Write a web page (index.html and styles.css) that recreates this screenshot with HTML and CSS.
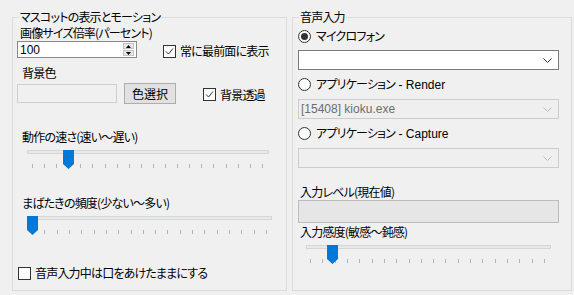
FILE: index.html
```html
<!DOCTYPE html>
<html>

<head>
  <meta charset="utf-8">
  <link rel="stylesheet" href="styles.css">
</head>

<body>
  <div class="window">

    <fieldset class="group group-left">
      <legend>マスコットの表示とモーション</legend>

      <div class="lbl lbl-size">画像サイズ倍率(パーセント)</div>
      <div class="row row-size">
        <div class="num">
          <span class="num-value">100</span>
          <div class="spin">
            <span class="spin-btn"><svg width="5" height="3" viewBox="0 0 5 3"><path d="M0 3 L2.5 0 L5 3 Z" fill="#000"/></svg></span>
            <span class="spin-btn"><svg width="5" height="3" viewBox="0 0 5 3"><path d="M0 0 L2.5 3 L5 0 Z" fill="#000"/></svg></span>
          </div>
        </div>
        <label class="check check-top">
          <span class="box"><svg width="11" height="11" viewBox="0 0 11 11"><polyline points="2,5.5 4.5,8 9,2.5" fill="none" stroke="#333" stroke-width="1"/></svg></span>
          常に最前面に表示
        </label>
      </div>

      <div class="lbl lbl-bg">背景色</div>
      <div class="row row-bg">
        <div class="color-box"></div>
        <button class="btn">色選択</button>
        <label class="check check-trans">
          <span class="box"><svg width="11" height="11" viewBox="0 0 11 11"><polyline points="2,5.5 4.5,8 9,2.5" fill="none" stroke="#333" stroke-width="1"/></svg></span>
          背景透過
        </label>
      </div>

      <div class="lbl lbl-speed">動作の速さ(速い～遅い)</div>
      <div class="slider slider-speed">
        <div class="track"></div>
        <div class="ticks ticks-speed"><i></i><i></i><i></i><i></i><i></i><i></i><i></i><i></i><i></i><i></i><i></i><i></i><i></i><i></i><i></i><i></i><i></i><i></i><i></i><i></i></div>
        <svg class="thumb" style="left: 36px" width="11" height="19" viewBox="0 0 11 19"><path d="M0 0 H11 V14 L5.5 19 L0 14 Z" fill="#0078d7"/></svg>
      </div>

      <div class="lbl lbl-blink">まばたきの頻度(少ない～多い)</div>
      <div class="slider slider-blink">
        <div class="track"></div>
        <div class="ticks ticks-blink"><i></i><i></i><i></i><i></i><i></i><i></i><i></i><i></i><i></i><i></i><i></i><i></i><i></i><i></i><i></i><i></i><i></i><i></i><i></i><i></i></div>
        <svg class="thumb" style="left: 0px" width="11" height="19" viewBox="0 0 11 19"><path d="M0 0 H11 V14 L5.5 19 L0 14 Z" fill="#0078d7"/></svg>
      </div>

      <label class="check check-mouth">
        <span class="box"></span>
        音声入力中は口をあけたままにする
      </label>
    </fieldset>

    <fieldset class="group group-right">
      <legend>音声入力</legend>

      <label class="radio radio-first">
        <span class="circle on"></span>
        マイクロフォン
      </label>
      <div class="combo">
        <span class="combo-text"></span>
        <svg width="9" height="5" viewBox="0 0 9 5"><polyline points="0.5,0.5 4.5,4.5 8.5,0.5" fill="none" stroke="#333" stroke-width="1"/></svg>
      </div>

      <label class="radio">
        <span class="circle"></span>
        <span>アプリケーション<span class="latin"> - Render</span></span>
      </label>
      <div class="combo off">
        <span class="combo-text">[15408] kioku.exe</span>
        <svg width="9" height="5" viewBox="0 0 9 5"><polyline points="0.5,0.5 4.5,4.5 8.5,0.5" fill="none" stroke="#bcbcbc" stroke-width="1"/></svg>
      </div>

      <label class="radio">
        <span class="circle"></span>
        <span>アプリケーション<span class="latin"> - Capture</span></span>
      </label>
      <div class="combo off">
        <span class="combo-text"></span>
        <svg width="9" height="5" viewBox="0 0 9 5"><polyline points="0.5,0.5 4.5,4.5 8.5,0.5" fill="none" stroke="#bcbcbc" stroke-width="1"/></svg>
      </div>

      <div class="lbl lbl-level">入力レベル(現在値)</div>
      <div class="level"></div>

      <div class="lbl lbl-sens">入力感度(敏感～鈍感)</div>
      <div class="slider slider-sens">
        <div class="track"></div>
        <div class="ticks ticks-sens"><i></i><i></i><i></i><i></i><i></i><i></i><i></i><i></i><i></i><i></i><i></i><i></i><i></i><i></i><i></i><i></i><i></i><i></i><i></i><i></i></div>
        <svg class="thumb" style="left: 21px" width="11" height="19" viewBox="0 0 11 19"><path d="M0 0 H11 V14 L5.5 19 L0 14 Z" fill="#0078d7"/></svg>
      </div>
    </fieldset>

  </div>
</body>

</html>
```

FILE: styles.css
```css
* {
  box-sizing: border-box;
}

body {
  margin: 0;
  background: #f0f0f0;
  color: #000;
  font-family: "Noto Sans CJK JP", sans-serif;
  font-size: 12px;
  line-height: 14px;
  letter-spacing: -0.8px;
  font-feature-settings: "palt";
}

.window {
  display: flex;
  gap: 5px;
  padding: 11px 0 0 12px;
}

/* group boxes */

.group {
  margin: 0;
  padding: 0;
  min-width: 0;
  height: 280px;
  border: 1px solid #dcdcdc;
}

.group-left {
  width: 275px;
}

.group-right {
  width: 280px;
}

.group legend {
  margin-left: 6px;
  padding: 0 1px;
  line-height: 12px;
}

.lbl {
  margin-left: 7px;
}

.row {
  display: flex;
  align-items: center;
}

/* left side */

.lbl-size {
  margin-top: 3px;
}

.row-size {
  margin-top: 1px;
  margin-left: 4px;
}

.num {
  display: flex;
  align-items: center;
  justify-content: space-between;
  width: 120px;
  height: 17px;
  padding: 0 2px 0 2px;
  background: #fff;
  border: 1px solid #8a8a8a;
  font-family: "Liberation Sans", sans-serif;
  letter-spacing: 0;
}

.spin {
  display: flex;
  flex-direction: column;
  gap: 1px;
}

.spin-btn {
  display: flex;
  align-items: center;
  justify-content: center;
  width: 11px;
  height: 6px;
  background: #e6e6e6;
  border: 1px solid #c4c4c4;
}

.check {
  display: flex;
  align-items: center;
  gap: 4px;
}

.box {
  display: flex;
  align-items: center;
  justify-content: center;
  flex: none;
  width: 13px;
  height: 13px;
  background: #fff;
  border: 1px solid #333;
}

.check-top {
  margin-left: 26px;
  margin-top: 3px;
}

.lbl-bg {
  margin-top: 8px;
  margin-left: 9px;
}

.row-bg {
  margin-top: 3px;
  margin-left: 4px;
}

.color-box {
  width: 100px;
  height: 19px;
  background: #f0f0f0;
  border: 1px solid #cfcfcf;
}

.btn {
  width: 52px;
  height: 21px;
  margin-left: 7px;
  padding: 0;
  background: #e1e1e1;
  border: 1px solid #adadad;
  font: inherit;
  letter-spacing: 0;
  color: #000;
}

.check-trans {
  margin-left: 27px;
  margin-top: 2px;
}

.lbl-speed {
  margin-top: 26px;
  margin-left: 9px;
}

.lbl-blink {
  margin-top: 21px;
  margin-left: 9px;
}

/* sliders */

.slider {
  position: relative;
  height: 25px;
  margin-left: 14px;
}

.slider-speed {
  width: 242px;
  margin-top: 4px;
}

.slider-blink {
  width: 245px;
  margin-top: 3px;
}

.slider-sens {
  width: 245px;
  margin-top: 4px;
  margin-left: 13px;
}

.track {
  height: 4px;
  margin-top: 6px;
  background: #e7eaea;
  border: 1px solid #d6d6d6;
}

.ticks {
  display: flex;
  justify-content: space-between;
  height: 4px;
  margin-top: 10px;
}

.ticks i {
  width: 1px;
  background: #b4b4b4;
}

.ticks-speed {
  margin-left: 5px;
  margin-right: 6px;
}

.ticks-blink {
  margin-left: 5px;
  margin-right: 5px;
}

.ticks-sens {
  margin-left: 4px;
  margin-right: 6px;
}

.thumb {
  position: absolute;
  top: 0;
}

.check-mouth {
  margin-top: 25px;
  margin-left: 5px;
}

/* right side */

.radio {
  display: flex;
  align-items: center;
  gap: 5px;
  margin-top: 7px;
  margin-left: 5px;
}

.radio-first {
  margin-top: 6px;
}

.circle {
  display: flex;
  align-items: center;
  justify-content: center;
  flex: none;
  width: 13px;
  height: 13px;
  background: #fff;
  border: 1px solid #333;
  border-radius: 50%;
}

.circle.on::after {
  content: "";
  width: 7px;
  height: 7px;
  background: #333;
  border-radius: 50%;
}

.latin {
  font-family: "Liberation Sans", sans-serif;
  letter-spacing: 0;
  white-space: pre;
}

.combo {
  display: flex;
  align-items: center;
  justify-content: space-between;
  width: 261px;
  height: 20px;
  margin-top: 7px;
  margin-left: 5px;
  padding: 0 6px 0 2px;
  background: #fff;
  border: 1px solid #7a7a7a;
}

.combo.off {
  background: #efefef;
  border-color: #cccccc;
}

.combo-text {
  color: #6d6d6d;
  font-family: "Liberation Sans", sans-serif;
  letter-spacing: 0;
}

.lbl-level {
  margin-top: 17px;
}

.level {
  width: 261px;
  height: 23px;
  margin-top: 1px;
  margin-left: 5px;
  background: #e6e6e6;
  border: 1px solid #bcbcbc;
}

.lbl-sens {
  margin-top: 2px;
}
```
